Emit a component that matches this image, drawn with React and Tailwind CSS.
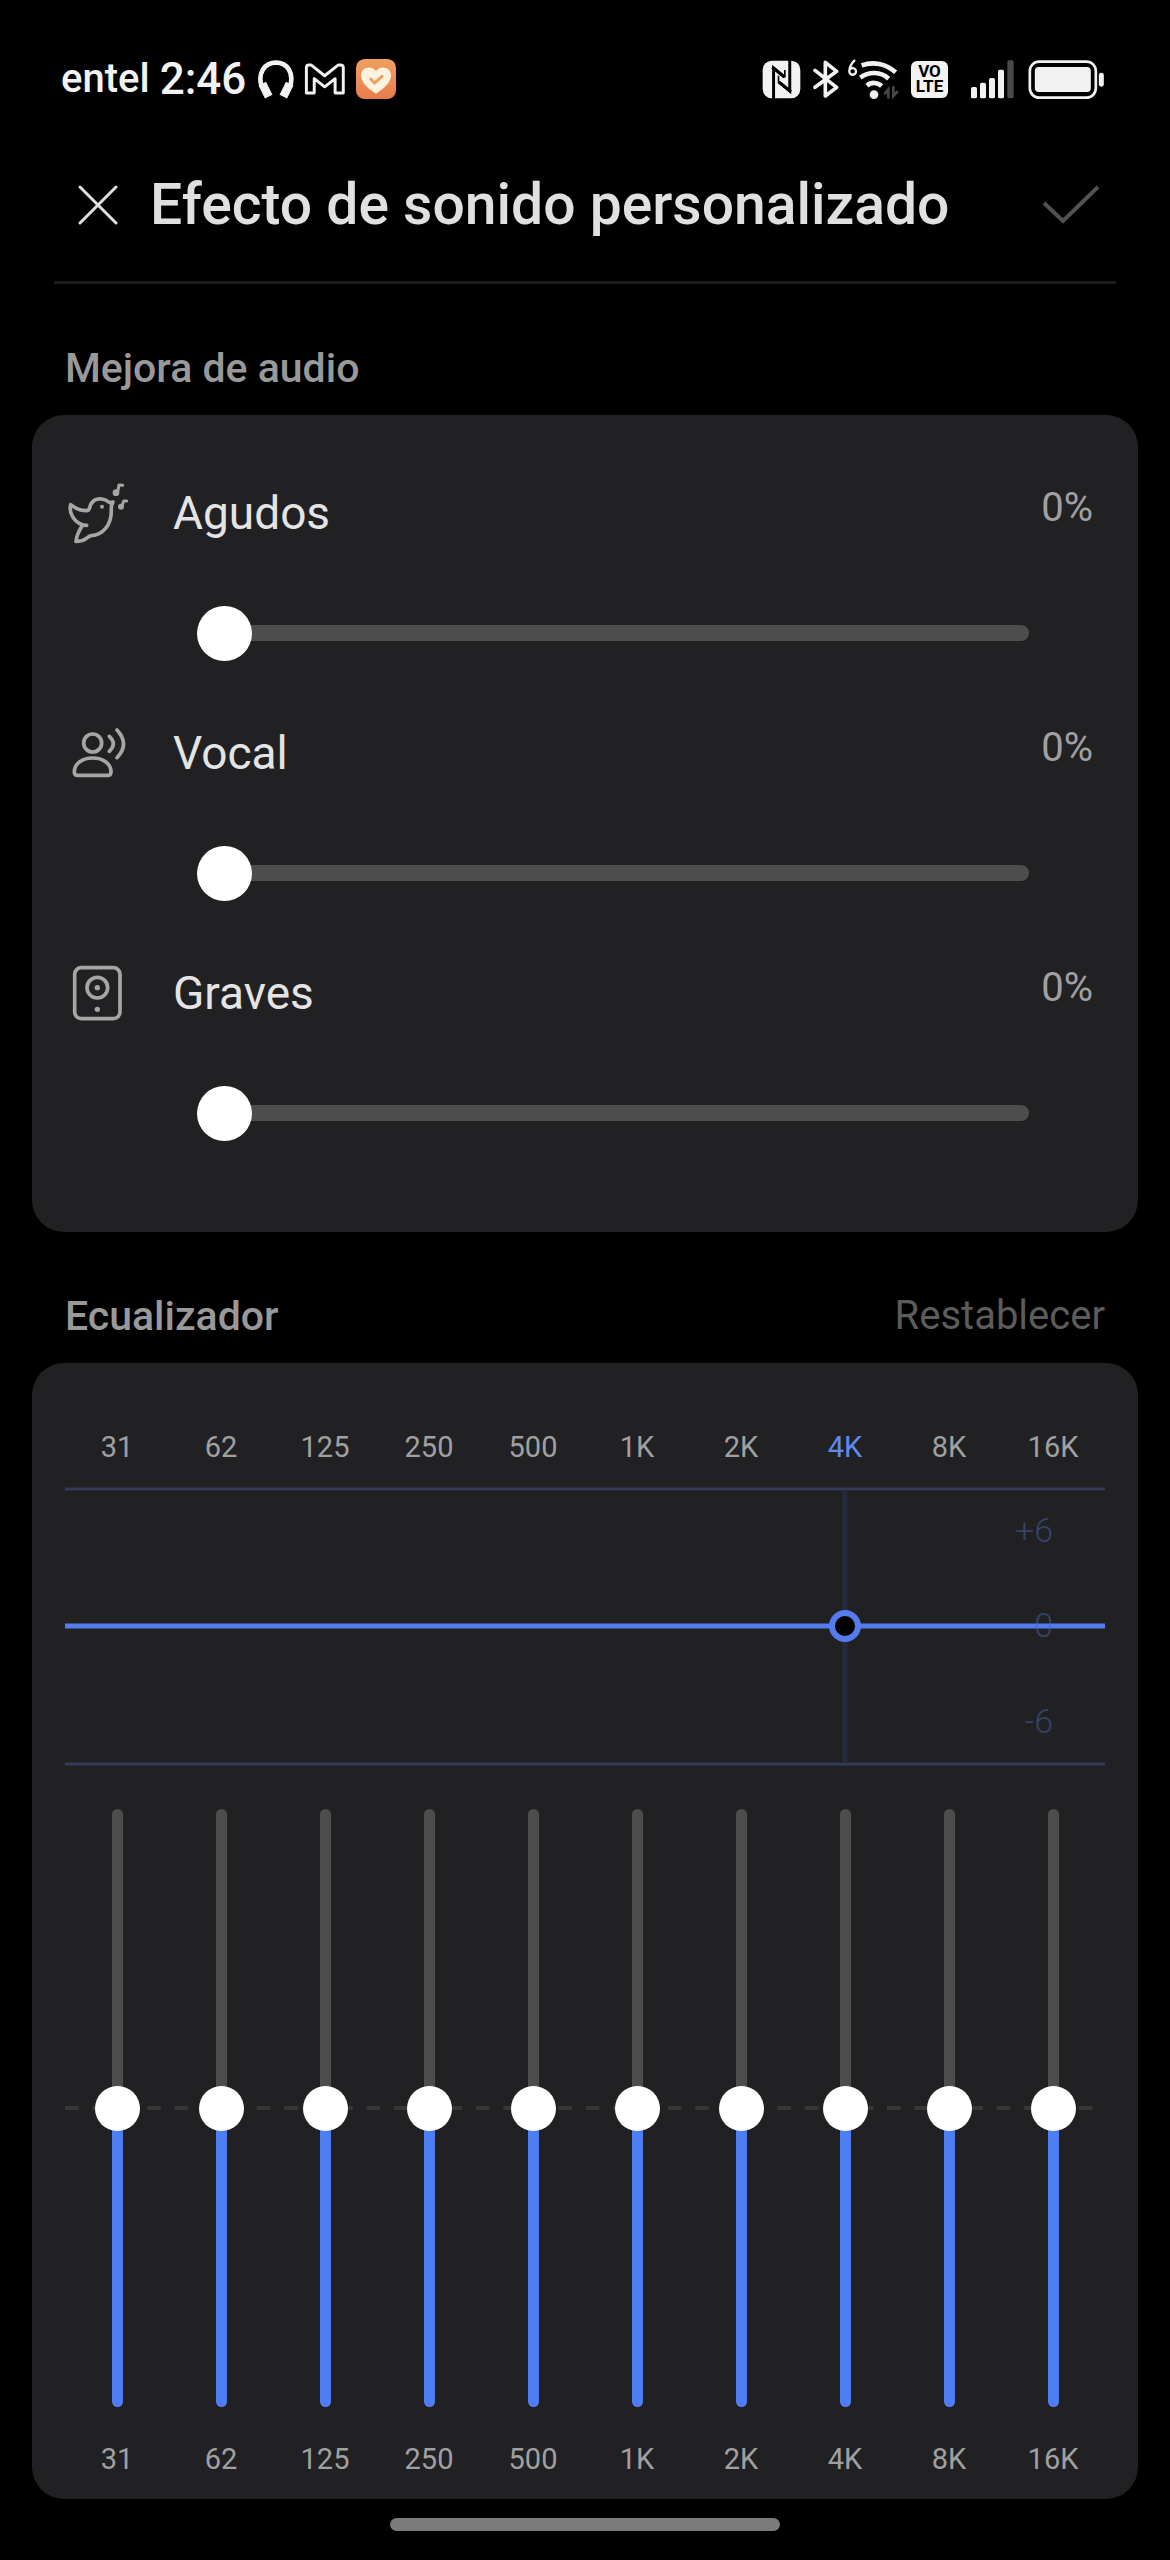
import React from "react";
import { useState } from "react";

const BANDS = ["31", "62", "125", "250", "500", "1K", "2K", "4K", "8K", "16K"];

const BirdIcon = () => (
  <svg viewBox="105 245 192 192" className="size-16 shrink-0" fill="none" stroke="#a6a6a7" strokeWidth="11" strokeLinecap="round" strokeLinejoin="round">
    <path d="M122 316C137 328 153 334 170 334C180 334 178 323 183 314C191 300 204 297 216 299C227 300 233 305 239 310L249 308C244 316 243 322 244 334C244 378 218 407 184 409C170 411 168 428 138 426C139 409 149 391 158 377C135 368 115 344 122 316Z" />
    <path d="M158 377L170 378" />
    <path d="M263 278L267 257L278 258M276 320L281 305L290 305" strokeWidth="9" />
    <circle cx="216" cy="322" r="6" fill="#a6a6a7" stroke="none" />
    <circle cx="258" cy="280" r="10" fill="#a6a6a7" stroke="none" />
    <circle cx="273" cy="322" r="9" fill="#a6a6a7" stroke="none" />
  </svg>
);

const VoiceIcon = () => (
  <svg viewBox="105 62 192 192" className="size-16 shrink-0" fill="none" stroke="#a6a6a7" strokeWidth="11" strokeLinecap="round">
    <circle cx="188" cy="128" r="27" />
    <path d="M133 214C133 190 158 173 188 173C218 173 243 190 243 214Q243 225 233 225H143Q133 225 133 214Z" />
    <path d="M238 108Q262 130 238 153M261 89Q300 131 261 172" />
  </svg>
);

const SpeakerIcon = () => (
  <svg viewBox="105 781 192 192" className="size-16 shrink-0" fill="none" stroke="#a6a6a7" strokeWidth="11">
    <rect x="134" y="801" width="136" height="153" rx="20" />
    <circle cx="202" cy="861" r="31" />
    <circle cx="202" cy="861" r="8" fill="#a6a6a7" stroke="none" />
    <circle cx="202" cy="926" r="8" fill="#a6a6a7" stroke="none" />
  </svg>
);

const ENHANCERS = [
  { id: "agudos", label: "Agudos", Icon: BirdIcon },
  { id: "vocal", label: "Vocal", Icon: VoiceIcon },
  { id: "graves", label: "Graves", Icon: SpeakerIcon },
];

const StatusBar = () => (
  <div className="flex h-[46px] items-center justify-between pl-[61px] pr-[65px] text-[#f2f2f2]">
    <div className="flex items-center">
      <span className="text-[40px] leading-none font-medium">entel</span>
      <span className="ml-[10px] text-[44px] leading-none font-medium">2:46</span>
      <svg viewBox="652 60 108 117" className="ml-3 h-[39px] w-9" fill="none" stroke="#f2f2f2">
        <path d="M663 140C650 98 672 68 706 68C740 68 761 98 748 140" strokeWidth="14" />
        <path d="M665 131L684 170M747 131L728 170" strokeWidth="25" />
      </svg>
      <svg viewBox="792 66 126 98" className="ml-[10px] h-8 w-[42px]" fill="none" stroke="#f2f2f2" strokeWidth="9" strokeLinejoin="round">
        <path d="M798 158V80Q798 72 806 72L812 72L854 105L896 72L902 72Q911 72 911 80V158H886V114L854 139L822 114V158Z" />
      </svg>
      <svg viewBox="0 0 120 120" className="ml-[10px] size-10">
        <defs>
          <linearGradient id="health" x1="0" y1="0" x2="0" y2="1">
            <stop offset="0" stopColor="#f0a060" />
            <stop offset="1" stopColor="#e87c4c" />
          </linearGradient>
        </defs>
        <rect width="120" height="120" rx="26" fill="url(#health)" />
        <path d="M60 104C34 88 15 70 15 49C15 24 46 18 60 36C74 18 105 24 105 49C105 70 86 88 60 104Z" fill="#fff3df" />
        <path d="M44 60L56 72L78 52" fill="none" stroke="#eda060" strokeWidth="9" strokeLinecap="round" />
      </svg>
    </div>
    <div className="flex items-center">
      <svg viewBox="64 60 116 118" className="size-[39px]">
        <rect x="65" y="62" width="114" height="114" rx="28" fill="#f2f2f2" />
        <path d="M98 178V84L130 111" fill="none" stroke="#000" strokeWidth="9" />
        <path d="M147 60V154L115 127" fill="none" stroke="#000" strokeWidth="9" />
        <path d="M94 82L132 112M151 156L113 126" fill="none" stroke="#000" strokeWidth="9" />
        <path d="M113 108V130M132 90V113" fill="none" stroke="#000" strokeWidth="5" />
      </svg>
      <svg viewBox="216 58 78 120" className="ml-3 h-10 w-[26px]" fill="none" stroke="#f2f2f2" strokeWidth="11" strokeLinecap="round" strokeLinejoin="round">
        <path d="M222 92L287 143L253 169V68L287 95L222 143" />
      </svg>
      <svg viewBox="324 50 156 126" className="ml-2 h-[42px] w-13" fill="none" stroke="#f2f2f2" strokeLinecap="round">
        <path d="M346 58C334 70 331 80 331 90A10 10 0 1 0 334 83" strokeWidth="7" />
        <path d="M368 72C402 60 440 66 470 93M364 109C390 90 425 90 449 112M384 133C396 122 415 122 428 134" strokeWidth="14" strokeLinecap="butt" />
        <circle cx="405" cy="160" r="13" fill="#f2f2f2" stroke="none" />
        <path d="M438 156L448 144V168M474 152L463 164V138" stroke="#484848" strokeWidth="8" />
      </svg>
      <div className="ml-3 flex size-[37px] flex-col items-center justify-center rounded-md bg-[#f2f2f2] text-[17px] leading-[15px] font-bold text-black">
        <span>VO</span>
        <span>LTE</span>
      </div>
      <svg viewBox="690 57 132 117" className="ml-[22px] h-[39px] w-11" fill="#f2f2f2">
        <rect x="693" y="138" width="18" height="34" rx="5" />
        <rect x="720" y="125" width="18" height="47" rx="5" />
        <rect x="747" y="111" width="18" height="61" rx="5" />
        <rect x="774" y="86" width="18" height="86" rx="5" />
        <rect x="802" y="58" width="19" height="114" rx="5" fill="#484848" />
      </svg>
      <svg viewBox="864 57 230 117" className="ml-[14px] h-[39px] w-[77px]" fill="#f2f2f2">
        <rect x="869" y="62" width="198" height="108" rx="28" fill="none" stroke="#f2f2f2" strokeWidth="8" />
        <rect x="884" y="78" width="168" height="75" rx="12" />
        <rect x="1076" y="95" width="15" height="42" rx="7" />
      </svg>
    </div>
  </div>
);

const SliderRow = ({ item, value, onChange }) => {
  const { id, label, Icon } = item;
  return (
    <div className="flex flex-col gap-20">
      <div className="flex h-16 items-center">
        <Icon />
        <label htmlFor={id} className="ml-11 text-[46px] leading-[56px] text-[#e4e4e4]">{label}</label>
        <output htmlFor={id} className="mr-3 ml-auto self-start text-[40px] leading-[54px] text-[#a0a0a1]">
          {value}%
        </output>
      </div>
      <div className="flex pr-[76px] pl-[132px]">
        <input
          id={id}
          type="range"
          min="0"
          max="100"
          value={value}
          onChange={(e) => onChange(Number(e.target.value))}
          className="block h-4 w-full appearance-none rounded-full [&::-webkit-slider-thumb]:size-[55px] [&::-webkit-slider-thumb]:appearance-none [&::-webkit-slider-thumb]:rounded-full [&::-webkit-slider-thumb]:bg-white"
          style={{ background: `linear-gradient(to right, #4f7df6 ${value}%, #4d4d4d ${value}%)` }}
        />
      </div>
    </div>
  );
};

// band centres sit in the middle of ten equal columns
const bandX = (i) => `${i * 10 + 5}%`;
const gainY = (gain) => 139 - gain * 23;

const Curve = ({ gains, active }) => (
  <svg className="mt-5 block h-[280px] w-full overflow-visible" fill="none">
    <line x1="0" x2="100%" y1="2" y2="2" stroke="#323c5a" strokeWidth="3" />
    <line x1="0" x2="100%" y1="277" y2="277" stroke="#323c5a" strokeWidth="3" />
    <line x1={bandX(active)} x2={bandX(active)} y1="3" y2="276" stroke="#262a3b" strokeWidth="5" />
    <g stroke="#557cee" strokeWidth="5">
      <line x1="0" x2={bandX(0)} y1={gainY(gains[0])} y2={gainY(gains[0])} />
      {gains.slice(1).map((gain, i) => (
        <line key={i} x1={bandX(i)} x2={bandX(i + 1)} y1={gainY(gains[i])} y2={gainY(gain)} />
      ))}
      <line x1={bandX(9)} x2="100%" y1={gainY(gains[9])} y2={gainY(gains[9])} />
    </g>
    <g fill="#4b64ad" fillOpacity="0.5" textAnchor="end" className="text-[34px] font-light">
      <text x="95%" y="55">+6</text>
      <text x="95%" y="150">0</text>
      <text x="95%" y="246">-6</text>
    </g>
    <circle cx={bandX(active)} cy={gainY(gains[active])} r="13" fill="#000" stroke="#557cee" strokeWidth="6" />
  </svg>
);

const App = () => {
  const [levels, setLevels] = useState([0, 0, 0]);
  const [gains, setGains] = useState(BANDS.map(() => 0));
  const [active, setActive] = useState(7);

  const changeLevel = (index, value) => {
    setLevels(levels.map((level, i) => (i === index ? value : level)));
  };

  const changeGain = (index, value) => {
    setActive(index);
    setGains(gains.map((gain, i) => (i === index ? value : gain)));
  };

  return (
    <div className="min-h-screen bg-black pt-14 pb-[29px] font-['Roboto',sans-serif]">
      <StatusBar />

      <header className="mx-[54px] mt-[67px] border-b-[3px] border-[#1c1c1c] pb-10">
        <div className="flex h-[72px] items-center pr-4 pl-6">
          <button type="button" aria-label="Cerrar">
            <svg viewBox="0 0 40 40" className="block size-10" stroke="#e0e0e0" strokeWidth="3" strokeLinecap="round">
              <path d="M2 2L38 38M38 2L2 38" />
            </svg>
          </button>
          <h1 className="ml-8 text-[57px] leading-[72px] font-medium text-[#e0e0e0]">Efecto de sonido personalizado</h1>
          <button type="button" aria-label="Guardar" className="ml-auto">
            <svg viewBox="0 0 58 40" className="block h-10 w-[58px]" fill="none" stroke="#515151" strokeWidth="4">
              <path d="M2 18L21 36L56 2" />
            </svg>
          </button>
        </div>
      </header>

      <main className="px-8">
        <h2 className="mt-[60px] px-[33px] text-[41px] leading-[48px] font-medium text-[#999999]">Mejora de audio</h2>
        <section className="mt-[23px] flex flex-col gap-20 rounded-4xl bg-[#212123] px-[33px] pt-[66px] pb-[111px]">
          {ENHANCERS.map((item, i) => (
            <SliderRow key={item.id} item={item} value={levels[i]} onChange={(value) => changeLevel(i, value)} />
          ))}
        </section>

        <div className="mt-[60px] flex items-center justify-between px-[33px] leading-[48px]">
          <h2 className="text-[41px] leading-[48px] font-medium text-[#999999]">Ecualizador</h2>
          <button type="button" className="text-[40px] leading-[48px] text-[#5c5c5c]" onClick={() => setGains(BANDS.map(() => 0))}>
            Restablecer
          </button>
        </div>
        <section className="mt-[23px] rounded-4xl bg-[#212123] px-[33px] pt-16 pb-5 text-[29px] leading-10 text-[#a0a0a1]">
          <div className="grid grid-cols-10">
            {BANDS.map((band, i) => (
              <button
                key={band}
                type="button"
                onClick={() => setActive(i)}
                className={i === active ? "text-[#6289ee]" : ""}
              >
                {band}
              </button>
            ))}
          </div>
          <Curve gains={gains} active={active} />
          <div className="relative mt-[42px] grid grid-cols-10">
            <svg className="absolute top-[297px] left-0 h-1 w-full" stroke="#363637" strokeWidth="4">
              <line x1="0" x2="99%" y1="2" y2="2" strokeDasharray="13.7 13.7" />
            </svg>
            {BANDS.map((band, i) => (
              <div key={band} className="relative flex flex-col items-center gap-8">
                <input
                  id={`band-${band}`}
                  type="range"
                  min="-6"
                  max="6"
                  value={gains[i]}
                  onChange={(e) => changeGain(i, Number(e.target.value))}
                  className="block h-[598px] w-[11px] appearance-none rounded-full [direction:rtl] [writing-mode:vertical-lr] [&::-webkit-slider-thumb]:size-[45px] [&::-webkit-slider-thumb]:appearance-none [&::-webkit-slider-thumb]:rounded-full [&::-webkit-slider-thumb]:bg-white"
                  style={{
                    background: `linear-gradient(to top, #4f7df6 ${((gains[i] + 6) / 12) * 100}%, #4d4d4d ${((gains[i] + 6) / 12) * 100}%)`,
                  }}
                />
                <label htmlFor={`band-${band}`}>{band}</label>
              </div>
            ))}
          </div>
        </section>
      </main>

      <div className="mx-auto mt-[19px] h-[13px] w-1/3 rounded-full bg-[#7b7b7b]" />
    </div>
  );
};

export default App;
